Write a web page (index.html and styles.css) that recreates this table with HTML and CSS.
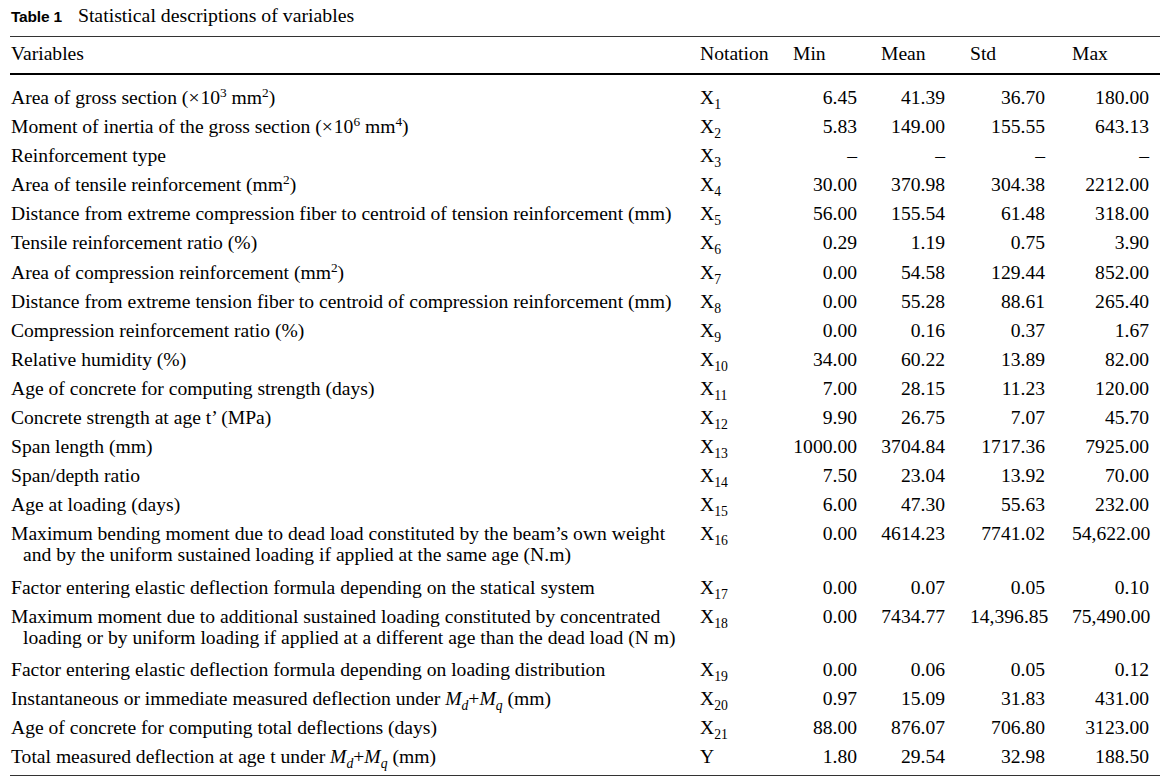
FILE: index.html
```html
<!DOCTYPE html>
<html>
<head>
<meta charset="utf-8">
<link rel="stylesheet" href="styles.css">
</head>
<body>
<div class="page">
  <div class="caption"><span class="label">Table 1</span><span class="title">Statistical descriptions of variables</span></div>
  <table class="stats">
    <colgroup>
      <col class="c-var"><col class="c-not"><col class="c-min"><col class="c-mean"><col class="c-std"><col class="c-max">
    </colgroup>
    <thead>
      <tr><th>Variables</th><th>Notation</th><th>Min</th><th>Mean</th><th>Std</th><th>Max</th></tr>
    </thead>
    <tbody>
      <tr class="first"><td>Area of gross section (<span class="times">×</span>10<sup>3</sup> mm<sup>2</sup>)</td><td>X<sub>1</sub></td><td>6.45</td><td>41.39</td><td>36.70</td><td>180.00</td></tr>
      <tr><td>Moment of inertia of the gross section (<span class="times">×</span>10<sup>6</sup> mm<sup>4</sup>)</td><td>X<sub>2</sub></td><td>5.83</td><td>149.00</td><td>155.55</td><td>643.13</td></tr>
      <tr><td>Reinforcement type</td><td>X<sub>3</sub></td><td>–</td><td>–</td><td>–</td><td>–</td></tr>
      <tr><td>Area of tensile reinforcement (mm<sup>2</sup>)</td><td>X<sub>4</sub></td><td>30.00</td><td>370.98</td><td>304.38</td><td>2212.00</td></tr>
      <tr><td>Distance from extreme compression fiber to centroid of tension reinforcement (mm)</td><td>X<sub>5</sub></td><td>56.00</td><td>155.54</td><td>61.48</td><td>318.00</td></tr>
      <tr><td>Tensile reinforcement ratio (%)</td><td>X<sub>6</sub></td><td>0.29</td><td>1.19</td><td>0.75</td><td>3.90</td></tr>
      <tr><td>Area of compression reinforcement (mm<sup>2</sup>)</td><td>X<sub>7</sub></td><td>0.00</td><td>54.58</td><td>129.44</td><td>852.00</td></tr>
      <tr><td>Distance from extreme tension fiber to centroid of compression reinforcement (mm)</td><td>X<sub>8</sub></td><td>0.00</td><td>55.28</td><td>88.61</td><td>265.40</td></tr>
      <tr><td>Compression reinforcement ratio (%)</td><td>X<sub>9</sub></td><td>0.00</td><td>0.16</td><td>0.37</td><td>1.67</td></tr>
      <tr><td>Relative humidity (%)</td><td>X<sub>10</sub></td><td>34.00</td><td>60.22</td><td>13.89</td><td>82.00</td></tr>
      <tr><td>Age of concrete for computing strength (days)</td><td>X<sub>11</sub></td><td>7.00</td><td>28.15</td><td>11.23</td><td>120.00</td></tr>
      <tr><td>Concrete strength at age t’ (MPa)</td><td>X<sub>12</sub></td><td>9.90</td><td>26.75</td><td>7.07</td><td>45.70</td></tr>
      <tr><td>Span length (mm)</td><td>X<sub>13</sub></td><td>1000.00</td><td>3704.84</td><td>1717.36</td><td>7925.00</td></tr>
      <tr><td>Span/depth ratio</td><td>X<sub>14</sub></td><td>7.50</td><td>23.04</td><td>13.92</td><td>70.00</td></tr>
      <tr><td>Age at loading (days)</td><td>X<sub>15</sub></td><td>6.00</td><td>47.30</td><td>55.63</td><td>232.00</td></tr>
      <tr><td><div class="wrap">Maximum bending moment due to dead load constituted by the beam’s own weight and by the uniform sustained loading if applied at the same age (N.m)</div></td><td>X<sub>16</sub></td><td>0.00</td><td>4614.23</td><td>7741.02</td><td>54,622.00</td></tr>
      <tr><td>Factor entering elastic deflection formula depending on the statical system</td><td>X<sub>17</sub></td><td>0.00</td><td>0.07</td><td>0.05</td><td>0.10</td></tr>
      <tr><td><div class="wrap">Maximum moment due to additional sustained loading constituted by concentrated loading or by uniform loading if applied at a different age than the dead load (N m)</div></td><td>X<sub>18</sub></td><td>0.00</td><td>7434.77</td><td>14,396.85</td><td>75,490.00</td></tr>
      <tr><td>Factor entering elastic deflection formula depending on loading distribution</td><td>X<sub>19</sub></td><td>0.00</td><td>0.06</td><td>0.05</td><td>0.12</td></tr>
      <tr><td>Instantaneous or immediate measured deflection under <span class="math">M<sub>d</sub></span>+<span class="math">M<sub>q</sub></span> (mm)</td><td>X<sub>20</sub></td><td>0.97</td><td>15.09</td><td>31.83</td><td>431.00</td></tr>
      <tr><td>Age of concrete for computing total deflections (days)</td><td>X<sub>21</sub></td><td>88.00</td><td>876.07</td><td>706.80</td><td>3123.00</td></tr>
      <tr class="last"><td>Total measured deflection at age t under <span class="math">M<sub>d</sub></span>+<span class="math">M<sub>q</sub></span> (mm)</td><td>Y</td><td>1.80</td><td>29.54</td><td>32.98</td><td>188.50</td></tr>
    </tbody>
  </table>
</div>
</body>
</html>
```

FILE: styles.css
```css
html, body {
  margin: 0;
  padding: 0;
  background: #ffffff;
}
body {
  font-family: "Liberation Serif", "Times New Roman", serif;
  color: #000;
}
.page {
  padding: 4px 10px 0 10px;
  width: 1150px;
}
.caption {
  display: flex;
  align-items: baseline;
  padding-left: 1px;
  height: 32px;
}
.label {
  font-family: "Liberation Sans", Arial, sans-serif;
  font-weight: bold;
  font-size: 15.5px;
  letter-spacing: -0.2px;
  margin-right: 16px;
}
.title {
  font-size: 19.8px;
}
.stats {
  width: 1150px;
  border-collapse: collapse;
  table-layout: fixed;
  font-size: 19.6px;
  line-height: 21px;
  border-top: 1.5px solid #333;
  border-bottom: 1.5px solid #333;
}
.c-var { width: 690px; }
.c-not { width: 93px; }
.c-min { width: 88px; }
.c-mean { width: 89px; }
.c-std { width: 102px; }
.c-max { width: 88px; }
.stats thead th {
  font-weight: normal;
  text-align: left;
  padding: 6px 0 9px 0;
  border-bottom: 2px solid #000;
}
.stats thead th:first-child { padding-left: 1px; }
.stats td {
  vertical-align: top;
  padding: 4.05px 0;
  text-align: right;
  white-space: nowrap;
}
.stats td:first-child {
  text-align: left;
  padding-left: 1px;
  white-space: normal;
}
.stats td:nth-child(2) { text-align: left; }
.stats td:nth-child(3) { padding-right: 24px; }
.stats td:nth-child(4) { padding-right: 25px; }
.stats td:nth-child(5) { padding-right: 27px; }
.stats td:nth-child(6) { padding-right: 11px; }
.stats tr.first td { padding-top: 12px; }
.stats tr.last td { padding-bottom: 8.5px; }
.wrap {
  padding-left: 12px;
  text-indent: -12px;
  width: 664px;
  padding-bottom: 3px;
}
sub {
  font-size: 0.7em;
  line-height: 0;
  vertical-align: -0.35em;
}
sup {
  font-size: 0.68em;
  line-height: 0;
  vertical-align: 0.55em;
}
.math {
  font-style: italic;
}
.math sub {
  font-style: italic;
}
.times {
  margin-right: 1px;
}
```
